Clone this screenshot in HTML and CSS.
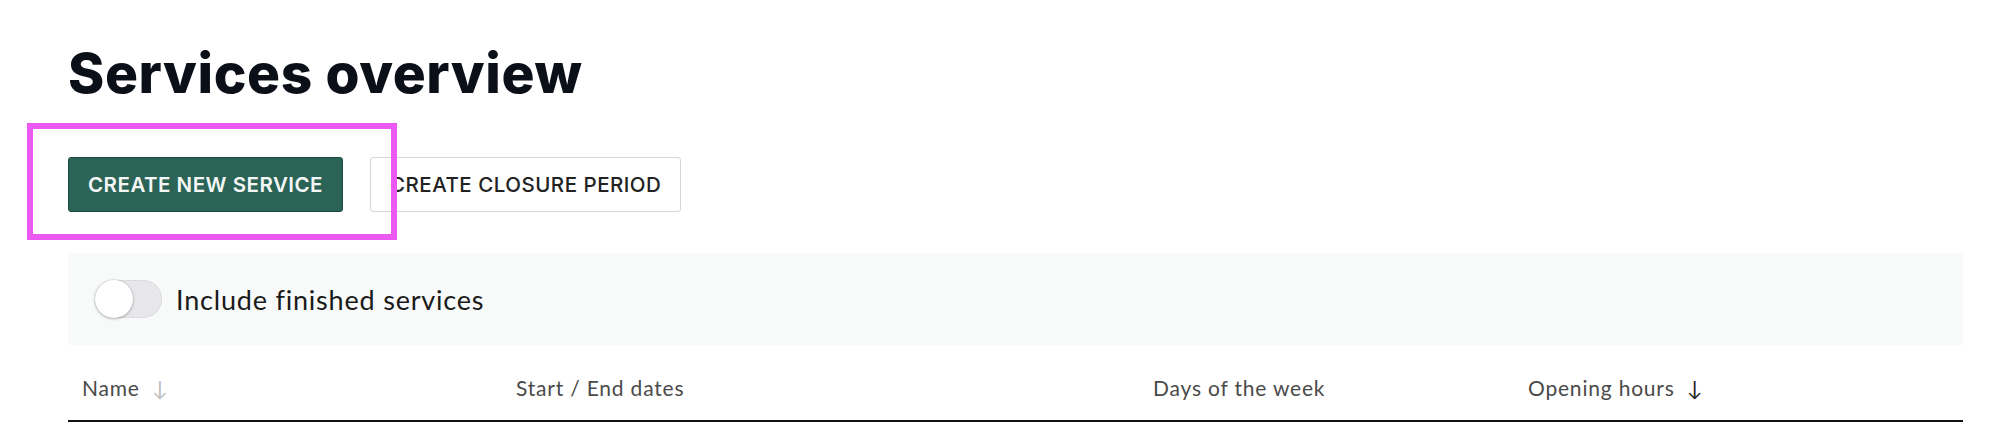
FILE: index.html
```html
<!DOCTYPE html>
<html lang="en">
<head>
  <meta charset="UTF-8" />
  <meta name="viewport" content="width=device-width, initial-scale=1.0"/>
  <title>Services overview</title>
  <link rel="stylesheet" href="styles.css">
</head>
<body>

<main class="page">
  <h1 class="page-title">Services overview</h1>

  <div class="actions">
    <button class="btn btn-primary">Create new service</button>
    <button class="btn btn-outline">Create closure period</button>
    <!-- highlight drawn over the primary action -->
    <span class="highlight"></span>
  </div>

  <div class="filters">
    <label class="toggle">
      <input type="checkbox" class="toggle-input">
      <span class="toggle-track"><span class="toggle-knob"></span></span>
      <span class="toggle-label">Include finished services</span>
    </label>
  </div>

  <table class="services">
    <thead>
      <tr>
        <th class="col-name">Name <span class="sort sort-muted">&darr;</span></th>
        <th class="col-dates">Start / End dates</th>
        <th class="col-days">Days of the week</th>
        <th class="col-hours">Opening hours <span class="sort">&darr;</span></th>
      </tr>
    </thead>
  </table>
</main>

</body>
</html>
```

FILE: styles.css
```css
body {
  margin: 0;
  padding: 0;
  background: #ffffff;
  font-family: 'Lato', sans-serif;
  color: #1a1a1a;
}

.page {
  padding: 0 51px 0 68px;
}

.page-title {
  margin: 0;
  padding-top: 40px;
  font-family: 'Inter', sans-serif;
  font-weight: 800;
  font-size: 55px;
  line-height: 66px;
  letter-spacing: 0.6px;
  color: #0b0f17;
}

.actions {
  position: relative;
  display: flex;
  gap: 27px;
  margin-top: 51px;
}

.btn {
  height: 55px;
  padding: 0 19px;
  font-family: 'Inter', sans-serif;
  font-size: 20.5px;
  letter-spacing: 0.5px;
  text-transform: uppercase;
  border-radius: 3px;
  cursor: pointer;
}

.btn-primary {
  background: #2b6457;
  color: #f4f7f5;
  border: 1px solid #1c4a3f;
  font-weight: 600;
}

.btn-outline {
  background: #ffffff;
  color: #222222;
  border: 1px solid #d6d6dc;
  font-weight: 500;
}

.highlight {
  position: absolute;
  left: -41px;
  top: -34px;
  width: 358px;
  height: 105px;
  border: 6px solid #ec58f2;
  pointer-events: none;
}

.filters {
  display: flex;
  align-items: center;
  height: 92px;
  margin-top: 41px;
  padding-left: 27px;
  background: #f8faf9;
}

.toggle {
  display: flex;
  align-items: center;
  gap: 14px;
  cursor: pointer;
}

.toggle-input {
  display: none;
}

.toggle-track {
  position: relative;
  display: block;
  width: 67px;
  height: 38px;
  border-radius: 19px;
  background: #e8e8ec;
  box-shadow: inset 0 0 0 1px #dcdce0;
}

.toggle-knob {
  position: absolute;
  left: 0;
  top: 0;
  width: 38px;
  height: 38px;
  border-radius: 50%;
  background: #ffffff;
  box-shadow: 0 1px 3px rgba(0, 0, 0, 0.25), 0 0 0 1px rgba(0, 0, 0, 0.06);
}

.toggle-label {
  font-size: 27px;
  letter-spacing: 0.8px;
  color: #1a1a1a;
}

.services {
  width: 100%;
  border-collapse: collapse;
  table-layout: fixed;
}

.services th {
  height: 65px;
  padding: 10px 14px 0;
  text-align: left;
  font-weight: 400;
  font-size: 21px;
  letter-spacing: 0.8px;
  color: #4a4a4a;
  border-bottom: 2px solid #111111;
  vertical-align: middle;
}

.col-name { width: 406px; }
.col-dates { width: 609px; }
.col-days { width: 347px; }

.sort {
  display: inline-block;
  margin-left: 6px;
  color: #222222;
}

.sort-muted {
  color: #bdbdbd;
}
```
